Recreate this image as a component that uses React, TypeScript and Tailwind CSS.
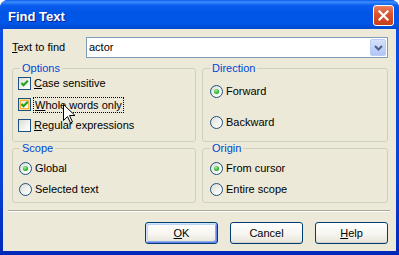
import type { ReactNode } from "react";

function Check({ checked, hot }: { checked?: boolean; hot?: boolean }) {
  return (
    <span
      className={`flex h-[13px] w-[13px] shrink-0 items-center justify-center border border-[#1C5180] bg-[linear-gradient(135deg,#DCDCD7_0%,#F4F4F0_60%,#FFFFFF_100%)] ${
        hot ? "shadow-[inset_0_0_0_1px_#FDD889,inset_0_0_0_2px_#F8B636]" : ""
      }`}
    >
      {checked ? (
        <svg width="11" height="11" viewBox="0 0 11 11">
          <polyline points="2.5,5 4.5,7.2 8.8,2.8" fill="none" stroke="#21A121" strokeWidth="2.2" />
        </svg>
      ) : null}
    </span>
  );
}

function Radio({ checked }: { checked?: boolean }) {
  return (
    <span className="flex h-[13px] w-[13px] shrink-0 items-center justify-center rounded-full border border-[#1C5180] bg-[linear-gradient(135deg,#DCDCD7_0%,#F4F4F0_60%,#FFFFFF_100%)]">
      {checked ? (
        <span className="h-[5px] w-[5px] rounded-full bg-[radial-gradient(circle_at_40%_35%,#A8F0A8_0%,#2DB82D_55%,#1A8A1A_100%)]" />
      ) : null}
    </span>
  );
}

function Group({ title, className, children }: { title: string; className: string; children: ReactNode }) {
  return (
    <fieldset className={`rounded-[3px] border border-[#D0D0BF] ${className}`}>
      <legend className="ml-[7px] px-[2px] leading-[11px] text-[#0046D5]">{title}</legend>
      {children}
    </fieldset>
  );
}

function Button({ children, isDefault }: { children: ReactNode; isDefault?: boolean }) {
  return (
    <button
      className={`flex h-[22px] w-[73px] items-center justify-center rounded-[3px] border border-[#003C74] bg-[linear-gradient(180deg,#FFFFFF_0%,#F6F5F0_55%,#E6E3D7_100%)] ${
        isDefault
          ? "shadow-[inset_1px_1px_0_#CEE7FF,inset_-1px_-1px_0_#6982EE,inset_2px_2px_0_#BCD4F6,inset_-2px_-2px_0_#89ADE4]"
          : "shadow-[inset_0_-1px_0_#D6D0C5]"
      }`}
    >
      {children}
    </button>
  );
}

export default function App() {
  return (
    <div className="h-[255px] w-[399px] bg-white font-['Liberation_Sans',Arial,sans-serif] text-[11px] leading-[13px] text-black select-none">
      <div className="relative flex h-full flex-col overflow-hidden rounded-t-[8px] bg-[linear-gradient(180deg,#0A4EE4_0%,#0842D8_70%,#0028B8_100%)]">
        {/* Title bar */}
        <div className="flex h-[29px] shrink-0 items-center bg-[linear-gradient(180deg,#0A5BF2_0%,#3D8FF8_7%,#0A5DEF_18%,#0055E5_45%,#0056E8_80%,#0048CE_100%)] pl-[8px] pr-[5px]">
          <span className="pt-[3px] text-[13px] font-bold leading-[15px] text-white [text-shadow:1px_1px_0_#0A1C8C]">
            Find Text
          </span>
          <div className="flex-1" />
          <div className="mt-[2px] flex h-[21px] w-[21px] items-center justify-center rounded-[3px] border border-white bg-[linear-gradient(180deg,#E8805F_0%,#D8532C_45%,#C53F1A_100%)]">
            <svg width="11" height="11" viewBox="0 0 11 11">
              <path d="M1.5 1.5 L9.5 9.5 M9.5 1.5 L1.5 9.5" stroke="white" strokeWidth="2.2" strokeLinecap="square" />
            </svg>
          </div>
        </div>

        {/* Body */}
        <div className="mx-[3px] mb-[4px] flex flex-1 flex-col bg-[#ECE9D8] pl-[9px] pr-[8px] pt-[8px]">
          <div className="flex h-[21px] items-center">
            <span className="w-[74px]">
              <u>T</u>ext to find
            </span>
            <div className="flex h-[21px] w-[302px] items-center border border-[#7F9DB9] bg-white">
              <span className="flex-1 pl-[2px]">actor</span>
              <div className="mr-px flex h-[17px] w-[16px] items-center justify-center rounded-[2px] border border-[#B9CCF5] bg-[linear-gradient(180deg,#D6E2FC_0%,#C3D3FA_50%,#B1C6F5_100%)]">
                <svg width="9" height="6" viewBox="0 0 9 6">
                  <polyline points="1,1 4.5,4.5 8,1" fill="none" stroke="#4D6185" strokeWidth="2" />
                </svg>
              </div>
            </div>
          </div>

          <div className="mt-[5px] flex gap-[6px]">
            <Group title="Options" className="h-[79px] w-[184px]">
              <div className="-mt-px flex flex-col pl-[5px]">
                <div className="flex h-[21px] items-center gap-[3px]">
                  <Check checked />
                  <span>
                    <u>C</u>ase sensitive
                  </span>
                </div>
                <div className="flex h-[21px] items-center gap-[3px]">
                  <Check checked hot />
                  <span className="-ml-px border border-dotted border-black px-px leading-[14px]">
                    <u>W</u>hole words only
                  </span>
                </div>
                <div className="flex h-[21px] items-center gap-[3px]">
                  <Check />
                  <span>
                    <u>R</u>egular expressions
                  </span>
                </div>
              </div>
            </Group>
            <Group title="Direction" className="h-[79px] w-[186px]">
              <div className="flex flex-col gap-[10px] pl-[7px] pt-[7px]">
                <div className="flex h-[21px] items-center gap-[3px]">
                  <Radio checked />
                  <span>Forward</span>
                </div>
                <div className="flex h-[21px] items-center gap-[3px]">
                  <Radio />
                  <span>Backward</span>
                </div>
              </div>
            </Group>
          </div>

          <div className="mt-px flex gap-[6px]">
            <Group title="Scope" className="h-[60px] w-[184px]">
              <div className="flex flex-col pl-[6px] pt-[4px]">
                <div className="flex h-[21px] items-center gap-[3px]">
                  <Radio checked />
                  <span>Global</span>
                </div>
                <div className="flex h-[21px] items-center gap-[3px]">
                  <Radio />
                  <span>Selected text</span>
                </div>
              </div>
            </Group>
            <Group title="Origin" className="h-[60px] w-[186px]">
              <div className="flex flex-col pl-[7px] pt-[4px]">
                <div className="flex h-[21px] items-center gap-[3px]">
                  <Radio checked />
                  <span>From cursor</span>
                </div>
                <div className="flex h-[21px] items-center gap-[3px]">
                  <Radio />
                  <span>Entire scope</span>
                </div>
              </div>
            </Group>
          </div>

          <div className="-ml-[4px] -mr-[2px] mt-[7px] border-t border-b border-t-[#ACA899] border-b-white" />

          <div className="mt-[10px] flex justify-end gap-[12px]">
            <Button isDefault>
              <span>
                <u>O</u>K
              </span>
            </Button>
            <Button>Cancel</Button>
            <Button>
              <span>
                <u>H</u>elp
              </span>
            </Button>
          </div>
        </div>

        {/* Mouse pointer */}
        <svg className="absolute left-[63px] top-[104px]" width="13" height="20" viewBox="0 0 13 20">
          <path d="M0.5 0.5 L0.5 16.5 L4.5 12.5 L7.5 19 L9.5 18 L6.5 11.5 L12 11.5 Z" fill="white" stroke="black" strokeWidth="1" />
        </svg>
      </div>
    </div>
  );
}
